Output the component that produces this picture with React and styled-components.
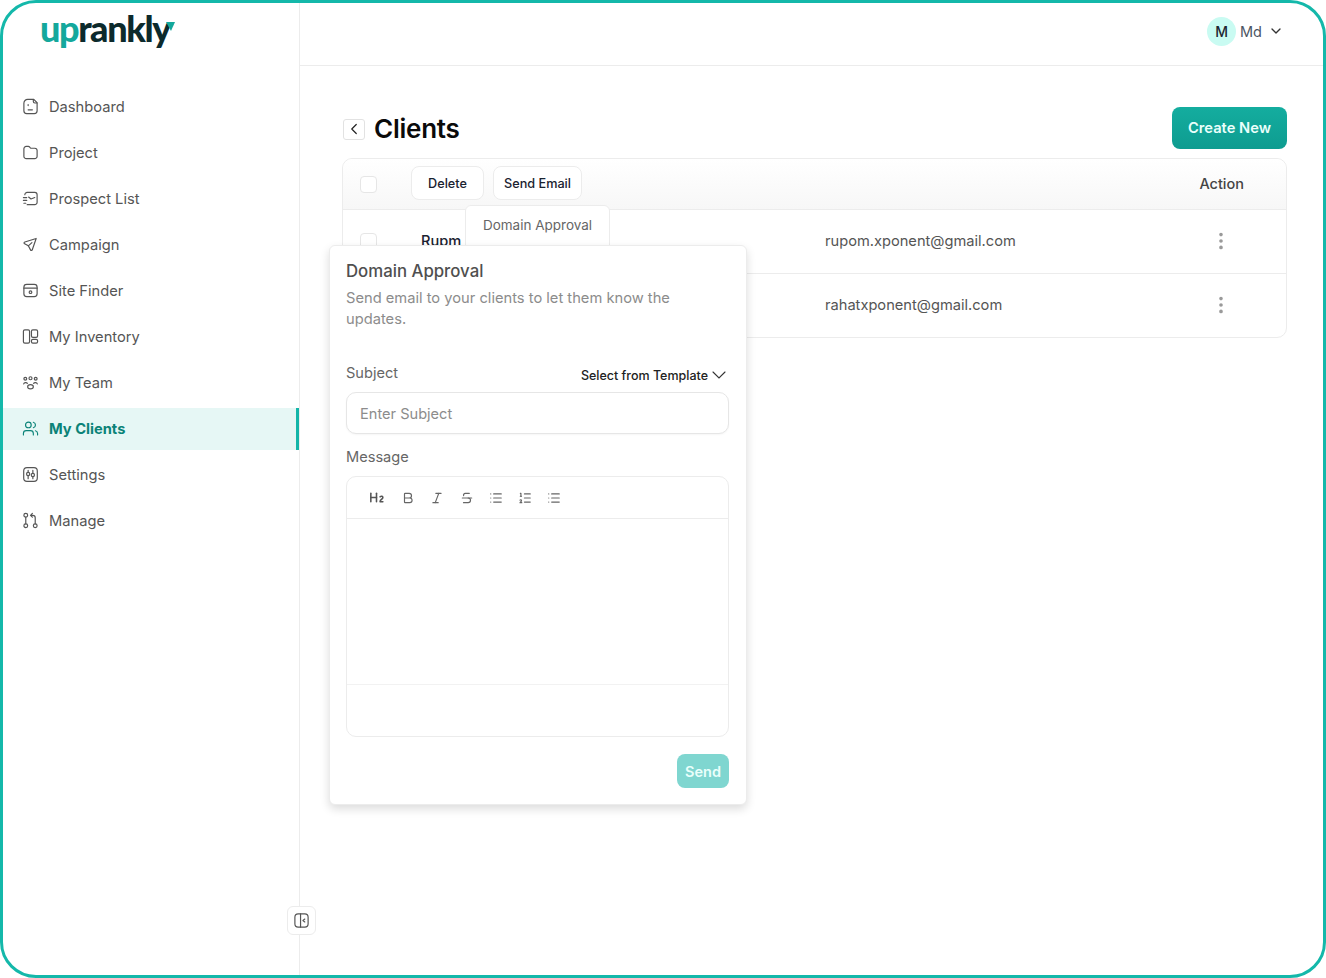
import React from 'react';
import styled, { createGlobalStyle } from 'styled-components';
import {
  Bold,
  ChevronDown,
  ChevronLeft,
  EllipsisVertical,
  Heading2,
  Italic,
  List,
  ListOrdered,
  Strikethrough,
  Users,
} from 'lucide-react';

const GlobalStyle = createGlobalStyle`
  html, body {
    margin: 0;
    padding: 0;
    background: #fff;
  }
  body {
    font-family: Inter, "Liberation Sans", sans-serif;
  }
  * {
    box-sizing: border-box;
  }
`;

const Frame = styled.div`
  position: relative;
  display: flex;
  width: 1326px;
  height: 978px;
  border: 3px solid #14b8aa;
  border-radius: 36px;
  overflow: hidden;
  background: #fff;
`;

const Sidebar = styled.aside`
  position: relative;
  flex: 0 0 297px;
  border-right: 1px solid #ececec;
`;

const LogoRow = styled.div`
  display: flex;
  align-items: flex-start;
  height: 83px;
  padding: 3px 0 0 37px;
`;

const LogoText = styled.span`
  font-family: Lato, Inter, sans-serif;
  font-size: 36px;
  font-weight: 900;
  line-height: 44px;
  letter-spacing: -1.4px;
  color: #0c2a2c;
`;

const LogoAccent = styled.span`
  color: #14a89c;
`;

const LogoMark = styled.svg`
  width: 9px;
  height: 9px;
  margin: 16px 0 0 -4px;
`;

const Nav = styled.nav`
  display: flex;
  flex-direction: column;
  gap: 4px;
`;

const NavItem = styled.a`
  display: flex;
  align-items: center;
  gap: 10px;
  height: 42px;
  padding: 0 0 1px 19px;
  font-size: 14.7px;
  font-weight: ${(p) => (p.$active ? 700 : 400)};
  color: ${(p) => (p.$active ? '#0b8378' : '#555')};
  background: ${(p) => (p.$active ? '#e6f7f5' : 'transparent')};
  border-right: 3px solid ${(p) => (p.$active ? '#13b5a8' : 'transparent')};
  svg {
    width: 17px;
    height: 17px;
    flex: none;
  }
`;

const CollapseButton = styled.button`
  position: absolute;
  right: -17px;
  bottom: 40px;
  display: flex;
  align-items: center;
  justify-content: center;
  width: 29px;
  height: 29px;
  padding: 0;
  color: #555;
  background: #fff;
  border: 1px solid #ececec;
  border-radius: 6px;
`;

const Main = styled.main`
  position: relative;
  flex: 1;
  min-width: 0;
`;

const Header = styled.header`
  display: flex;
  align-items: center;
  justify-content: flex-end;
  height: 63px;
  padding: 0 39px 6px 0;
  border-bottom: 1px solid #ececec;
`;

const Avatar = styled.span`
  display: flex;
  align-items: center;
  justify-content: center;
  width: 29px;
  height: 29px;
  font-size: 14px;
  font-weight: 500;
  color: #1c2430;
  background: #c9fbf2;
  border-radius: 50%;
`;

const UserName = styled.span`
  margin: 0 6px 0 4px;
  font-size: 14.5px;
  color: #4b5563;
`;

const Content = styled.div`
  padding: 41px 36px 0 42px;
`;

const TitleRow = styled.div`
  display: flex;
  align-items: center;
  justify-content: space-between;
  height: 42px;
  margin-bottom: 9px;
`;

const TitleGroup = styled.div`
  display: flex;
  align-items: center;
  gap: 9px;
`;

const BackButton = styled.button`
  display: flex;
  align-items: center;
  justify-content: center;
  width: 22px;
  height: 21px;
  margin: 2px 0 0 1px;
  padding: 0;
  color: #222;
  background: #fff;
  border: 1px solid #e2e2e2;
  border-radius: 3px;
`;

const Title = styled.h1`
  margin: 0;
  font-size: 26px;
  font-weight: 600;
  letter-spacing: -0.25px;
  color: #0a0a0a;
`;

const CreateButton = styled.button`
  width: 115px;
  height: 42px;
  padding: 0;
  font-family: inherit;
  font-size: 14.7px;
  font-weight: 600;
  color: #eafffb;
  background: linear-gradient(180deg, #14ad9f 0%, #0e9c90 100%);
  border: 0;
  border-radius: 8px;
`;

const Table = styled.div`
  border: 1px solid #ececec;
  border-radius: 10px;
`;

const TableHead = styled.div`
  display: flex;
  align-items: center;
  height: 51px;
  padding: 0 42px 0 17px;
  background: linear-gradient(180deg, #fff 0%, #f7f7f7 100%);
  border-bottom: 1px solid #ececec;
  border-radius: 10px 10px 0 0;
`;

const Check = styled.span`
  flex: none;
  width: 17px;
  height: 17px;
  background: #fff;
  border: 1px solid #e6e6e6;
  border-radius: 4px;
`;

const HeadButton = styled.button`
  height: 34px;
  margin: -2px 0 0 ${(p) => p.$gap}px;
  padding: 0;
  width: ${(p) => p.$width}px;
  font-family: inherit;
  font-size: 12.7px;
  font-weight: 500;
  color: #1a2230;
  background: #fff;
  border: 1px solid #ececec;
  border-radius: 8px;
`;

const ActionLabel = styled.span`
  margin: -2px 0 0 auto;
  font-size: 14.5px;
  font-weight: 500;
  color: #444;
`;

const Row = styled.div`
  display: flex;
  align-items: center;
  height: ${(p) => (p.$last ? 63 : 64)}px;
  padding: 0 54px 1px 17px;
  border-bottom: ${(p) => (p.$last ? '0' : '1px solid #ececec')};
`;

const RowName = styled.span`
  width: 404px;
  margin-left: 44px;
  font-size: 14.6px;
  font-weight: 500;
  color: #1a2230;
`;

const RowEmail = styled.span`
  flex: 1;
  font-size: 14.65px;
  color: #555;
`;

const RowMenu = styled.span`
  display: flex;
  color: #9a9a9a;
`;

const Dropdown = styled.div`
  position: absolute;
  left: 165px;
  top: 202px;
  width: 145px;
  height: 50px;
  padding-top: 11px;
  font-size: 13.5px;
  text-align: center;
  color: #666;
  background: #fff;
  border: 1px solid #ececec;
  border-radius: 6px;
`;

const Modal = styled.section`
  position: absolute;
  left: 29px;
  top: 242px;
  width: 418px;
  height: 560px;
  padding: 14px 16px 0;
  background: #fff;
  border: 1px solid #ececec;
  border-radius: 6px;
  box-shadow: 0 4px 10px rgba(0, 0, 0, 0.14);
`;

const ModalTitle = styled.h2`
  margin: 0;
  font-size: 16.8px;
  line-height: 22px;
  font-weight: 500;
  color: #4f4f4f;
`;

const ModalText = styled.p`
  max-width: 340px;
  margin: 6px 0 0;
  font-size: 14.7px;
  line-height: 21px;
  color: #8c8c8c;
`;

const FieldHead = styled.div`
  display: flex;
  align-items: center;
  justify-content: space-between;
  width: 383px;
  margin-top: ${(p) => p.$top}px;
  height: 22px;
`;

const FieldLabel = styled.label`
  font-size: 14.6px;
  color: #666;
`;

const TemplateSelect = styled.span`
  display: flex;
  align-items: center;
  gap: 4px;
  padding: 4px 3px 0 0;
  font-size: 12.5px;
  font-weight: 500;
  color: #222;
`;

const SubjectInput = styled.input`
  display: block;
  width: 383px;
  height: 42px;
  margin-top: 8px;
  padding: 2px 13px 0;
  font-family: inherit;
  font-size: 14.6px;
  color: #333;
  background: #fff;
  border: 1px solid #e6e6e6;
  border-radius: 10px;
  box-shadow: 0 1px 2px rgba(0, 0, 0, 0.04);
  &::placeholder {
    color: #8c8c8c;
  }
`;

const Editor = styled.div`
  display: flex;
  flex-direction: column;
  width: 383px;
  height: 261px;
  margin-top: 8px;
  border: 1px solid #ececec;
  border-radius: 10px;
`;

const EditorTools = styled.div`
  display: flex;
  align-items: center;
  gap: 15.2px;
  flex: 0 0 42px;
  padding-left: 21px;
  color: #666;
  border-bottom: 1px solid #ececec;
  svg {
    width: 14px;
    height: 14px;
  }
`;

const HeadingTool = styled(Heading2)`
  && {
    width: 17px;
    height: 17px;
    margin-right: 1px;
  }
  color: #555;
`;

const EditorBody = styled.div`
  flex: 0 0 166px;
  border-bottom: 1px solid #f2f2f2;
`;

const ModalFooter = styled.div`
  display: flex;
  justify-content: flex-end;
  width: 383px;
  margin-top: 17px;
`;

const SendButton = styled.button`
  width: 52px;
  height: 34px;
  padding: 0;
  font-family: inherit;
  font-size: 14.5px;
  font-weight: 600;
  color: #eafffb;
  background: #7fd6d0;
  border: 0;
  border-radius: 8px;
`;

const Icon = ({ children, size = 17 }) => (
  <svg
    width={size}
    height={size}
    viewBox="0 0 18 18"
    fill="none"
    stroke="currentColor"
    strokeWidth="1.25"
    strokeLinecap="round"
    strokeLinejoin="round"
  >
    {children}
  </svg>
);

const DashboardIcon = () => (
  <Icon>
    <path d="M6 1.5h6.5l3.5 3.5v8.5a3 3 0 0 1-3 3H5a3 3 0 0 1-3-3v-8a4 4 0 0 1 4-4z" />
    <path d="M12 1.8v2a1.5 1.5 0 0 0 1.5 1.5h2.3M6.5 7v1M6.5 12.5h4.5" />
  </Icon>
);

const FolderIcon = () => (
  <Icon>
    <path d="M2 5a2.5 2.5 0 0 1 2.5-2.5h2.2c.8 0 1.2.4 1.7 1l.8 1h4.3A2.5 2.5 0 0 1 16 7v6a2.5 2.5 0 0 1-2.5 2.5h-9A2.5 2.5 0 0 1 2 13z" />
  </Icon>
);

const ProspectIcon = () => (
  <Icon>
    <path d="M3 5a2.5 2.5 0 0 1 2.5-2.5h8A2.5 2.5 0 0 1 16 5v8a2.5 2.5 0 0 1-2.5 2.5h-8" />
    <path d="M1.5 8H5M1.5 11H5M2 14h2M7 7.5l2.5 2 4-1.5" />
  </Icon>
);

const PlaneIcon = () => (
  <Icon>
    <path d="M15 2.6 3 6.3c-1 .3-1.1 1.4-.2 1.9l3.9 2.2 2.3 4.3c.5.9 1.6.7 1.9-.2z" />
    <path d="m6.7 10.4 3.8-3.4" />
  </Icon>
);

const SiteIcon = () => (
  <Icon>
    <rect x="2" y="2.5" width="14" height="13" rx="3" />
    <path d="M2 6.5h14" />
    <circle cx="9" cy="10.8" r="1.4" />
  </Icon>
);

const InventoryIcon = () => (
  <Icon>
    <rect x="1.5" y="2" width="6.5" height="14" rx="1.5" />
    <rect x="10" y="2" width="6.5" height="8" rx="1.5" />
    <rect x="10" y="12" width="6.5" height="4" rx="1.5" />
  </Icon>
);

const TeamIcon = () => (
  <Icon>
    <circle cx="9" cy="4.5" r="1.6" />
    <circle cx="3.5" cy="5" r="1.5" />
    <circle cx="14.5" cy="5" r="1.5" />
    <path d="M1.8 10.5c.5-1.5 3-1.8 3.9-.6M16.2 10.5c-.5-1.5-3-1.8-3.9-.6" />
    <ellipse cx="9" cy="13.5" rx="3" ry="2.3" />
  </Icon>
);

const SettingsIcon = () => (
  <Icon>
    <rect x="1.8" y="1.8" width="14.4" height="14.4" rx="3.5" />
    <path d="M6.5 4.5v2M6.5 10.5v3M11.5 4.5v3M11.5 11.5v2" />
    <circle cx="6.5" cy="8.5" r="1.7" />
    <circle cx="11.5" cy="9.5" r="1.7" />
  </Icon>
);

const ManageIcon = () => (
  <Icon>
    <circle cx="4" cy="3.5" r="2" />
    <circle cx="4" cy="14.5" r="2" />
    <circle cx="14" cy="14.5" r="2" />
    <path d="M4 5.5v7M14 12.5V6a2.5 2.5 0 0 0-2.5-2.5H9.5M11 1.5l-2 2 2 2" />
  </Icon>
);

const CollapseIcon = () => (
  <Icon size={17}>
    <rect x="2" y="2" width="14" height="14" rx="3.5" />
    <path d="M8 2v14M12.5 7.5 10.5 9l2 1.5" />
  </Icon>
);

const TemplateChevron = () => (
  <svg width="14" height="8" viewBox="0 0 14 8" fill="none" stroke="#333" strokeWidth="1.1" strokeLinecap="round">
    <path d="M1 1l6 6 6-6" />
  </svg>
);

const navItems = [
  { label: 'Dashboard', icon: <DashboardIcon /> },
  { label: 'Project', icon: <FolderIcon /> },
  { label: 'Prospect List', icon: <ProspectIcon /> },
  { label: 'Campaign', icon: <PlaneIcon /> },
  { label: 'Site Finder', icon: <SiteIcon /> },
  { label: 'My Inventory', icon: <InventoryIcon /> },
  { label: 'My Team', icon: <TeamIcon /> },
  { label: 'My Clients', icon: <Users strokeWidth={1.6} />, active: true },
  { label: 'Settings', icon: <SettingsIcon /> },
  { label: 'Manage', icon: <ManageIcon /> },
];

export default function App() {
  return (
    <>
      <GlobalStyle />
      <Frame>
        <Sidebar>
          <LogoRow>
            <LogoText>
              <LogoAccent>up</LogoAccent>rankly
            </LogoText>
            <LogoMark viewBox="0 0 9 9">
              <path d="M0 0h9L5 9z" fill="#14a89c" />
            </LogoMark>
          </LogoRow>
          <Nav>
            {navItems.map((item) => (
              <NavItem key={item.label} $active={item.active}>
                {item.icon}
                {item.label}
              </NavItem>
            ))}
          </Nav>
          <CollapseButton>
            <CollapseIcon />
          </CollapseButton>
        </Sidebar>
        <Main>
          <Header>
            <Avatar>M</Avatar>
            <UserName>Md</UserName>
            <ChevronDown size={16} color="#333" />
          </Header>
          <Content>
            <TitleRow>
              <TitleGroup>
                <BackButton>
                  <ChevronLeft size={18} strokeWidth={1.6} />
                </BackButton>
                <Title>Clients</Title>
              </TitleGroup>
              <CreateButton>Create New</CreateButton>
            </TitleRow>
            <Table>
              <TableHead>
                <Check />
                <HeadButton $width={73} $gap={34}>
                  Delete
                </HeadButton>
                <HeadButton $width={89} $gap={9}>
                  Send Email
                </HeadButton>
                <ActionLabel>Action</ActionLabel>
              </TableHead>
              <Row>
                <Check />
                <RowName>Rupm</RowName>
                <RowEmail>rupom.xponent@gmail.com</RowEmail>
                <RowMenu>
                  <EllipsisVertical size={22} />
                </RowMenu>
              </Row>
              <Row $last>
                <Check />
                <RowName />
                <RowEmail>rahatxponent@gmail.com</RowEmail>
                <RowMenu>
                  <EllipsisVertical size={22} />
                </RowMenu>
              </Row>
            </Table>
          </Content>
          <Dropdown>Domain Approval</Dropdown>
          <Modal>
            <ModalTitle>Domain Approval</ModalTitle>
            <ModalText>Send email to your clients to let them know the updates.</ModalText>
            <FieldHead $top={32}>
              <FieldLabel>Subject</FieldLabel>
              <TemplateSelect>
                Select from Template
                <TemplateChevron />
              </TemplateSelect>
            </FieldHead>
            <SubjectInput placeholder="Enter Subject" readOnly />
            <FieldHead $top={12}>
              <FieldLabel>Message</FieldLabel>
            </FieldHead>
            <Editor>
              <EditorTools>
                <HeadingTool strokeWidth={2.2} />
                <Bold />
                <Italic />
                <Strikethrough />
                <List />
                <ListOrdered />
                <List />
              </EditorTools>
              <EditorBody />
            </Editor>
            <ModalFooter>
              <SendButton>Send</SendButton>
            </ModalFooter>
          </Modal>
        </Main>
      </Frame>
    </>
  );
}
